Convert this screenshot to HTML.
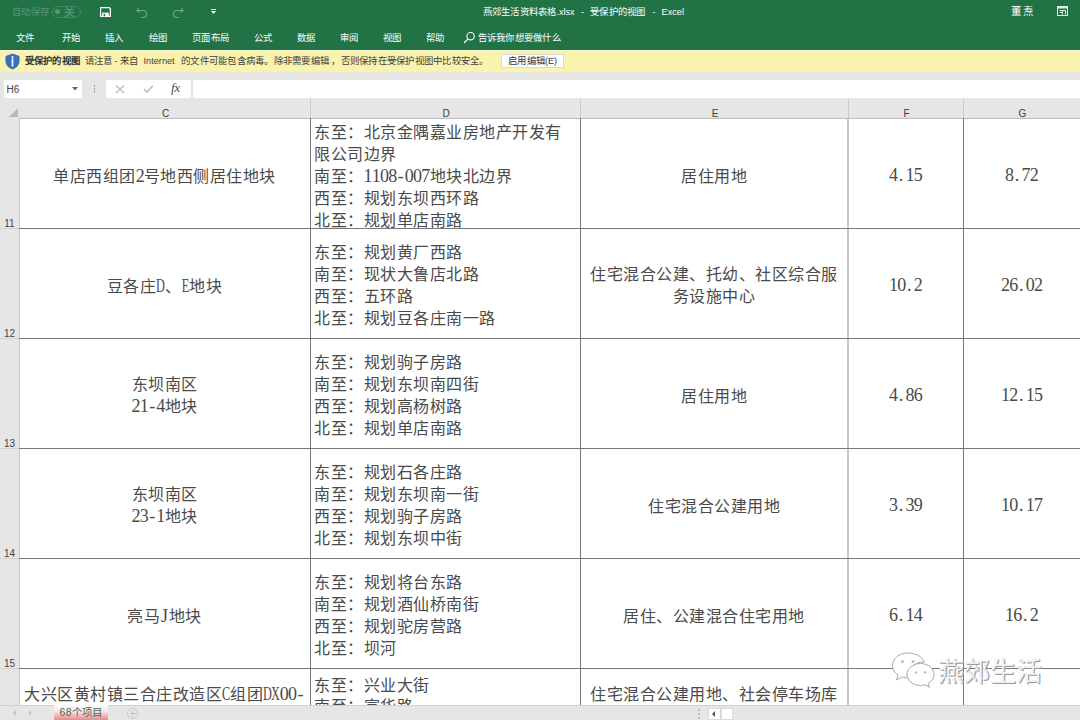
<!DOCTYPE html>
<html lang="zh-CN"><head><meta charset="utf-8">
<style>
*{margin:0;padding:0;box-sizing:border-box}
html,body{width:1080px;height:720px;overflow:hidden;background:#fff;font-family:"Liberation Sans",sans-serif}
.abs{position:absolute}
#title{left:0;top:0;width:1080px;height:50px;background:#217346}
.t{position:absolute;color:#fff;font-size:9.4px;line-height:12px;white-space:nowrap;letter-spacing:0.25px}
.t.l9{font-size:9px;letter-spacing:0}
.t.m{color:#404040}
#msg{left:0;top:50px;width:1080px;height:22px;background:#f9f3ae;border-top:1px solid #fbf8d6}
#gap{left:0;top:72px;width:1080px;height:33px;background:linear-gradient(#e6e5e3,#e4e5e9)}
.box{position:absolute;background:#fff}
#hdr{left:0;top:98px;width:1080px;height:21px;background:#e6e6e6;border-bottom:1px solid #bdbdbd}
.ch{position:absolute;top:10px;height:12px;line-height:12px;font-size:10px;color:#3c3c3c;text-align:center}
#rowh{left:0;top:118px;width:20px;height:587px;background:#e6e6e6;border-right:1px solid #c6c6c6}
.rn{position:absolute;left:0;width:19px;font-size:10px;color:#444;text-align:center}
.vl{position:absolute;top:118px;width:1px;height:587px;background:#787878}
.hl{position:absolute;left:19px;width:1061px;height:1px;background:#787878}
.cell{position:absolute;font-family:"Liberation Serif",serif;font-size:16px;letter-spacing:0.5px;line-height:21.85px;color:#4a4a4a;white-space:nowrap}
.cell .l{font-size:18px;letter-spacing:0}
.cell .l .p{text-align:left;text-indent:1.5px}
.cell .l span{display:inline-block;width:8.25px;text-align:center}
.cell .l .u i{font-style:normal;display:inline-block;margin:0 -4px;transform:scaleX(0.68)}
.cc{text-align:center;display:flex;align-items:center;justify-content:center;flex-direction:column}
#bot{left:0;top:705px;width:1080px;height:15px;background:#e6e6e6;border-top:1px solid #d0d0d0}
</style></head><body>
<div id="title" class="abs"></div>
<div class="t" style="left:12px;top:6px;color:#579670">自动保存</div>
<div class="abs" style="left:52px;top:6px;width:29px;height:11.5px;border:1px solid #468762;border-radius:6px"></div>
<div class="abs" style="left:54.5px;top:9.2px;width:5px;height:5px;border-radius:2.5px;background:#579670"></div>
<div class="t" style="left:64px;top:6px;color:#579670;font-size:10.5px;font-weight:bold">关</div>
<svg class="abs" style="left:100px;top:7px" width="11" height="10" viewBox="0 0 11 10"><path d="M0.6 0.6h8.6l1.2 1.2v7.6h-9.8z" fill="none" stroke="#fff" stroke-width="1.2"/><rect x="2.2" y="5.6" width="6.6" height="3.8" fill="#fff"/><rect x="3.6" y="6.8" width="1.6" height="2.4" fill="#217346"/></svg>
<svg class="abs" style="left:136px;top:6px" width="12" height="12" viewBox="0 0 12 12"><path d="M3 2L1 4.5L3.5 6.5M1.3 4.5H7a3.5 3.5 0 0 1 0 7H5" fill="none" stroke="#6ea585" stroke-width="1.2"/></svg>
<svg class="abs" style="left:172px;top:6px" width="12" height="12" viewBox="0 0 12 12"><path d="M9 2L11 4.5L8.5 6.5M10.7 4.5H5a3.5 3.5 0 0 0 0 7H7" fill="none" stroke="#6ea585" stroke-width="1.2"/></svg>
<div class="abs" style="left:211px;top:9px;width:5px;height:1px;background:#dfeee5"></div>
<svg class="abs" style="left:211px;top:10.5px" width="5" height="3" viewBox="0 0 5 3"><path d="M0 0L5 0L2.5 3z" fill="#fff"/></svg>
<div class="t" style="left:482.5px;top:5.5px">燕郊生活资料表格</div>
<div class="t l9" style="left:556.5px;top:5.5px">.xlsx</div>
<div class="t l9" style="left:581px;top:5.5px">-</div>
<div class="t" style="left:590px;top:5.5px">受保护的视图</div>
<div class="t l9" style="left:652.5px;top:5.5px">-</div>
<div class="t l9" style="left:661.5px;top:5.5px;font-size:9.2px">Excel</div>
<div class="t" style="left:1011px;top:4.5px;font-size:10.5px;letter-spacing:1.5px">董焘</div>
<svg class="abs" style="left:1057px;top:6px" width="11" height="10" viewBox="0 0 11 10"><rect x="0.5" y="0.5" width="10" height="9" fill="none" stroke="#dfeee5" stroke-width="1"/><rect x="0.5" y="0.5" width="10" height="2" fill="#dfeee5"/><path d="M2.5 4.5h6v4M5.5 4.5v4M2.5 6.5l3 0" fill="none" stroke="#dfeee5" stroke-width="1"/></svg>
<div class="t" style="left:15.5px;top:32px">文件</div>
<div class="t" style="left:62px;top:32px">开始</div>
<div class="t" style="left:105px;top:32px">插入</div>
<div class="t" style="left:148.5px;top:32px">绘图</div>
<div class="t" style="left:192px;top:32px">页面布局</div>
<div class="t" style="left:253.5px;top:32px">公式</div>
<div class="t" style="left:296.5px;top:32px">数据</div>
<div class="t" style="left:340px;top:32px">审阅</div>
<div class="t" style="left:383px;top:32px">视图</div>
<div class="t" style="left:426px;top:32px">帮助</div>
<svg class="abs" style="left:463px;top:31px" width="13" height="13" viewBox="0 0 13 13"><circle cx="7.6" cy="5.2" r="3.7" fill="none" stroke="#fff" stroke-width="1.1"/><path d="M5 7.9L1 12" stroke="#fff" stroke-width="1.2"/></svg>
<div class="t" style="left:477.5px;top:32px">告诉我你想要做什么</div>

<div id="msg" class="abs"></div>
<div id="gap" class="abs"></div>
<svg class="abs" style="left:5px;top:53px" width="15" height="17" viewBox="0 0 15 17"><path d="M7.5 0.5L14.5 3v5c0 4-3 7-7 8.5C3.5 15 0.5 12 0.5 8V3z" fill="#3a70b8"/><circle cx="7.5" cy="4.2" r="1.1" fill="#e8f2ff"/><rect x="6.6" y="5.6" width="1.8" height="8" fill="#e8f2ff"/></svg>
<div class="t" style="left:24.5px;top:55px;color:#333;font-weight:bold">受保护的视图</div>
<div class="t m" style="left:84.5px;top:55px">请注意</div>
<div class="t m l9" style="left:114.5px;top:55px">-</div>
<div class="t m" style="left:120px;top:55px">来自</div>
<div class="t m l9" style="left:143.5px;top:55px;font-size:9.2px">Internet</div>
<div class="t m" style="left:181px;top:55px">的文件可能包含病毒。除非需要编辑</div>
<div class="t m" style="left:331px;top:55px">，</div>
<div class="t m" style="left:340.5px;top:55px">否则保持在受保护视图中比较安全。</div>
<div class="abs" style="left:501px;top:54px;width:62.5px;height:14px;background:#fff;border:1px solid #d8d8d8"></div>
<div class="t m" style="left:508px;top:55px;color:#333">启用编辑</div>
<div class="t m l9" style="left:545px;top:55px;color:#333">(E)</div>

<div class="box" style="left:4px;top:80px;width:78px;height:18px"></div>
<div class="box" style="left:106px;top:80px;width:85px;height:18px"></div>
<div class="box" style="left:193px;top:80px;width:887px;height:18px"></div>

<div class="t" style="left:6.5px;top:83.5px;color:#444;font-size:10px;letter-spacing:0">H6</div>
<svg class="abs" style="left:72px;top:87px" width="6" height="3.5" viewBox="0 0 6 3.5"><path d="M0 0H6L3 3.5z" fill="#666"/></svg>
<div class="abs" style="left:93.5px;top:85.25px;width:1.5px;height:1.5px;background:#a0a0a0"></div>
<div class="abs" style="left:93.5px;top:88.25px;width:1.5px;height:1.5px;background:#a0a0a0"></div>
<div class="abs" style="left:93.5px;top:91.25px;width:1.5px;height:1.5px;background:#a0a0a0"></div>
<svg class="abs" style="left:115px;top:84px" width="10" height="10" viewBox="0 0 10 10"><path d="M1 1.5L9 9M9 1.5L1 9" stroke="#bcbcbc" stroke-width="1.3"/></svg>
<svg class="abs" style="left:143px;top:84px" width="11" height="10" viewBox="0 0 11 10"><path d="M1 5L4 8.2L9.8 1.8" fill="none" stroke="#b8b8b8" stroke-width="1.5"/></svg>
<div class="t" style="left:171px;top:82px;color:#505050;font-family:'Liberation Serif',serif;font-style:italic;font-size:13.5px;letter-spacing:-0.5px">fx</div>
<div id="hdr" class="abs">
<div class="ch" style="left:20px;width:291px">C</div>
<div class="ch" style="left:311px;width:270px">D</div>
<div class="ch" style="left:581px;width:268px">E</div>
<div class="ch" style="left:849px;width:115px">F</div>
<div class="ch" style="left:964px;width:117px">G</div>
<svg style="position:absolute;left:9px;top:10px" width="9" height="9" viewBox="0 0 9 9"><path d="M9 0V9H0z" fill="#b9b9b9"/></svg></div>
<div id="rowh" class="abs"></div>
<div class="rn" style="top:217.5px">11</div>
<div class="rn" style="top:327.5px">12</div>
<div class="rn" style="top:437.5px">13</div>
<div class="rn" style="top:547.5px">14</div>
<div class="rn" style="top:657.5px">15</div>
<div class="abs" style="left:310px;top:99px;width:1px;height:19px;background:#cbcbcb"></div>
<div class="abs" style="left:580px;top:99px;width:1px;height:19px;background:#cbcbcb"></div>
<div class="abs" style="left:848px;top:99px;width:1px;height:19px;background:#cbcbcb"></div>
<div class="abs" style="left:963px;top:99px;width:1px;height:19px;background:#cbcbcb"></div>
<div class="vl" style="left:310px"></div>
<div class="vl" style="left:580px"></div>
<div class="vl" style="left:963px"></div>
<div class="vl" style="left:847px;width:2px;background:#c6c6c6"></div>
<div class="hl" style="top:228px"></div>
<div class="abs" style="left:0;top:228px;width:19px;height:1px;background:#d2d2d2"></div>
<div class="hl" style="top:338px"></div>
<div class="abs" style="left:0;top:338px;width:19px;height:1px;background:#d2d2d2"></div>
<div class="hl" style="top:448px"></div>
<div class="abs" style="left:0;top:448px;width:19px;height:1px;background:#d2d2d2"></div>
<div class="hl" style="top:558px"></div>
<div class="abs" style="left:0;top:558px;width:19px;height:1px;background:#d2d2d2"></div>
<div class="hl" style="top:668px"></div>
<div class="abs" style="left:0;top:668px;width:19px;height:1px;background:#d2d2d2"></div>
<div class="cell cc" style="left:19px;top:122.5px;width:291px;height:109px;"><div>单店西组团<span class="l"><span>2</span></span>号地西侧居住地块</div></div>
<div class="cell cc" style="left:314px;top:122.5px;width:266px;height:109px;align-items:flex-start;text-align:left"><div>东至：北京金隅嘉业房地产开发有<br>限公司边界<br>南至：<span class="l"><span>1</span><span>1</span><span>0</span><span>8</span><span>-</span><span>0</span><span>0</span><span>7</span></span>地块北边界<br>西至：规划东坝西环路<br>北至：规划单店南路</div></div>
<div class="cell cc" style="left:580px;top:122.5px;width:268px;height:109px;"><div>居住用地</div></div>
<div class="cell cc" style="left:848px;top:121.3px;width:115px;height:109px;"><div><span class="l"><span>4</span><span class="p">.</span><span>1</span><span>5</span></span></div></div>
<div class="cell cc" style="left:963px;top:121.3px;width:117px;height:109px;"><div><span class="l"><span>8</span><span class="p">.</span><span>7</span><span>2</span></span></div></div>
<div class="cell cc" style="left:19px;top:232.5px;width:291px;height:109px;"><div>豆各庄<span class="l"><span class="u"><i>D</i></span></span>、<span class="l"><span class="u"><i>E</i></span></span>地块</div></div>
<div class="cell cc" style="left:314px;top:231.2px;width:266px;height:109px;align-items:flex-start;text-align:left"><div>东至：规划黄厂西路<br>南至：现状大鲁店北路<br>西至：五环路<br>北至：规划豆各庄南一路</div></div>
<div class="cell cc" style="left:580px;top:231.2px;width:268px;height:109px;"><div>住宅混合公建、托幼、社区综合服<br>务设施中心</div></div>
<div class="cell cc" style="left:848px;top:231.3px;width:115px;height:109px;"><div><span class="l"><span>1</span><span>0</span><span class="p">.</span><span>2</span></span></div></div>
<div class="cell cc" style="left:963px;top:231.3px;width:117px;height:109px;"><div><span class="l"><span>2</span><span>6</span><span class="p">.</span><span>0</span><span>2</span></span></div></div>
<div class="cell cc" style="left:19px;top:341.2px;width:291px;height:109px;"><div>东坝南区<br><span class="l"><span>2</span><span>1</span><span>-</span><span>4</span></span>地块</div></div>
<div class="cell cc" style="left:314px;top:341.2px;width:266px;height:109px;align-items:flex-start;text-align:left"><div>东至：规划驹子房路<br>南至：规划东坝南四街<br>西至：规划高杨树路<br>北至：规划单店南路</div></div>
<div class="cell cc" style="left:580px;top:342.5px;width:268px;height:109px;"><div>居住用地</div></div>
<div class="cell cc" style="left:848px;top:341.3px;width:115px;height:109px;"><div><span class="l"><span>4</span><span class="p">.</span><span>8</span><span>6</span></span></div></div>
<div class="cell cc" style="left:963px;top:341.3px;width:117px;height:109px;"><div><span class="l"><span>1</span><span>2</span><span class="p">.</span><span>1</span><span>5</span></span></div></div>
<div class="cell cc" style="left:19px;top:451.2px;width:291px;height:109px;"><div>东坝南区<br><span class="l"><span>2</span><span>3</span><span>-</span><span>1</span></span>地块</div></div>
<div class="cell cc" style="left:314px;top:451.2px;width:266px;height:109px;align-items:flex-start;text-align:left"><div>东至：规划石各庄路<br>南至：规划东坝南一街<br>西至：规划驹子房路<br>北至：规划东坝中街</div></div>
<div class="cell cc" style="left:580px;top:452.5px;width:268px;height:109px;"><div>住宅混合公建用地</div></div>
<div class="cell cc" style="left:848px;top:451.3px;width:115px;height:109px;"><div><span class="l"><span>3</span><span class="p">.</span><span>3</span><span>9</span></span></div></div>
<div class="cell cc" style="left:963px;top:451.3px;width:117px;height:109px;"><div><span class="l"><span>1</span><span>0</span><span class="p">.</span><span>1</span><span>7</span></span></div></div>
<div class="cell cc" style="left:19px;top:562.5px;width:291px;height:109px;"><div>亮马<span class="l"><span>J</span></span>地块</div></div>
<div class="cell cc" style="left:314px;top:561.2px;width:266px;height:109px;align-items:flex-start;text-align:left"><div>东至：规划将台东路<br>南至：规划酒仙桥南街<br>西至：规划驼房营路<br>北至：坝河</div></div>
<div class="cell cc" style="left:580px;top:562.5px;width:268px;height:109px;"><div>居住、公建混合住宅用地</div></div>
<div class="cell cc" style="left:848px;top:561.3px;width:115px;height:109px;"><div><span class="l"><span>6</span><span class="p">.</span><span>1</span><span>4</span></span></div></div>
<div class="cell cc" style="left:963px;top:561.3px;width:117px;height:109px;"><div><span class="l"><span>1</span><span>6</span><span class="p">.</span><span>2</span></span></div></div>
<div class="cell" style="left:24px;top:684.0px;width:286px;height:21.0px;overflow:hidden">大兴区黄村镇三合庄改造区<span class="l"><span class="u"><i>C</i></span></span>组团<span class="l"><span class="u"><i>D</i></span><span class="u"><i>X</i></span><span>0</span><span>0</span><span>-</span></span></div>
<div class="cell" style="left:314px;top:674.5px;width:266px;height:30.5px;overflow:hidden">东至：兴业大街<br>南至：富华路</div>
<div class="cell" style="left:580px;top:684.0px;width:268px;height:21.0px;overflow:hidden;text-align:center">住宅混合公建用地、社会停车场库</div>
<div class="abs" style="left:886px;top:648px;width:160px;height:44px;">
<svg class="abs" style="left:5px;top:4px" width="44" height="38" viewBox="0 0 44 38">
<g fill="#fff" stroke="#a8a8a8" stroke-width="1">
<path d="M17 1C8 1 1.5 6.5 1.5 13.5c0 4 2 7 5.5 9.5l-1.5 5 6-3c2 .6 3.6.8 5.5.8.6 0 1 0 1.5-.1-.3-1-.5-2-.5-3.2 0-7 6.5-12.5 14.5-12.5h.8C31.5 5 25 1 17 1z"/>
<path d="M43 22.5c0-6-6-11-13.5-11S16 16.5 16 22.5 22 33.5 29.5 33.5c1.6 0 3-.2 4.5-.7l4.5 2.5-1.2-4c3.5-2.2 5.7-5.3 5.7-8.8z"/>
</g>
<g fill="#bbb"><circle cx="11.5" cy="9.5" r="1.5"/><circle cx="22" cy="9.5" r="1.5"/><circle cx="25" cy="20.5" r="1.2"/><circle cx="34" cy="20.5" r="1.2"/></g>
</svg>
<div class="abs" style="left:52px;top:9px;font-size:26px;line-height:30px;color:rgba(255,255,255,0.85);letter-spacing:0px;white-space:nowrap;text-shadow:1px 1px 0 #9a9a9a,-0.5px -0.5px 0 #cfcfcf,1px 0 0 #b5b5b5">燕郊生活</div>
</div>
<div id="bot" class="abs"></div>
<div class="abs" style="left:13px;top:710px;width:0;height:0;border-top:3px solid transparent;border-bottom:3px solid transparent;border-right:3px solid #c4c4c4"></div>
<div class="abs" style="left:29px;top:710px;width:0;height:0;border-top:3px solid transparent;border-bottom:3px solid transparent;border-left:3px solid #c4c4c4"></div>
<div class="abs" style="left:54px;top:705px;width:54px;height:15px;background:linear-gradient(#fdfdfd 0%,#f7e3e3 45%,#e9a3a3 85%,#e58a8a 100%)"></div>
<div class="t" style="left:59.5px;top:707px;color:#4a6b52;font-size:10.4px;letter-spacing:0.35px">68个项目</div>
<div class="abs" style="left:127px;top:708px;width:11px;height:11px;border:1px solid #c8c8c8;border-radius:50%"></div>
<div class="abs" style="left:129.5px;top:713px;width:6px;height:1px;background:#c8c8c8"></div>
<div class="abs" style="left:132px;top:710.5px;width:1px;height:6px;background:#c8c8c8"></div>
<div class="abs" style="left:698px;top:709px;width:1.5px;height:1.5px;background:#bbb"></div>
<div class="abs" style="left:698px;top:713px;width:1.5px;height:1.5px;background:#bbb"></div>
<div class="abs" style="left:698px;top:717px;width:1.5px;height:1.5px;background:#bbb"></div>
<div class="abs" style="left:708px;top:708px;width:13px;height:12px;background:#fff;border:1px solid #dadada"></div>
<div class="abs" style="left:712px;top:711px;width:0;height:0;border-top:3px solid transparent;border-bottom:3px solid transparent;border-right:3px solid #555"></div>
<div class="abs" style="left:721px;top:708px;width:12px;height:12px;background:#fff;border:1px solid #dadada"></div>
</body></html>
